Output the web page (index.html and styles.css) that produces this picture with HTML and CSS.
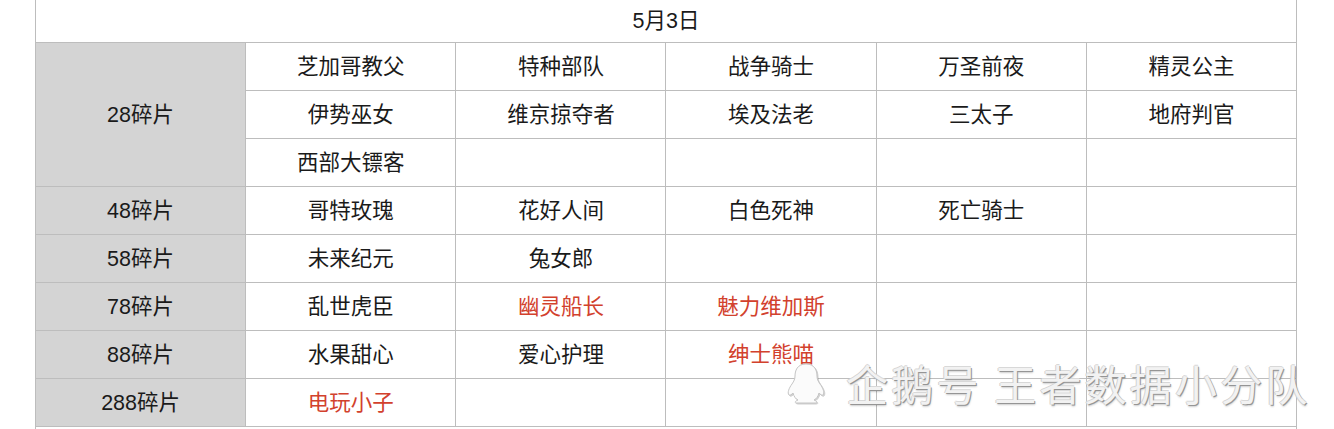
FILE: index.html
```html
<!DOCTYPE html>
<html lang="zh">
<head>
<meta charset="utf-8">
<title>5月3日</title>
<link rel="stylesheet" href="styles.css">
</head>
<body>
<div class="page">
  <table class="grid">
    <colgroup>
      <col class="c"><col class="c"><col class="c"><col class="c"><col class="c"><col class="c">
    </colgroup>
    <tr class="head"><td colspan="6">5月3日</td></tr>
    <tr><td class="label" rowspan="3">28碎片</td><td>芝加哥教父</td><td>特种部队</td><td>战争骑士</td><td>万圣前夜</td><td>精灵公主</td></tr>
    <tr><td>伊势巫女</td><td>维京掠夺者</td><td>埃及法老</td><td>三太子</td><td>地府判官</td></tr>
    <tr><td>西部大镖客</td><td></td><td></td><td></td><td></td></tr>
    <tr><td class="label">48碎片</td><td>哥特玫瑰</td><td>花好人间</td><td>白色死神</td><td>死亡骑士</td><td></td></tr>
    <tr><td class="label">58碎片</td><td>未来纪元</td><td>兔女郎</td><td></td><td></td><td></td></tr>
    <tr><td class="label">78碎片</td><td>乱世虎臣</td><td class="red">幽灵船长</td><td class="red">魅力维加斯</td><td></td><td></td></tr>
    <tr><td class="label">88碎片</td><td>水果甜心</td><td>爱心护理</td><td class="red">绅士熊喵</td><td></td><td></td></tr>
    <tr><td class="label">288碎片</td><td class="red">电玩小子</td><td></td><td></td><td></td><td></td></tr>
    <tr class="next"><td colspan="6"></td></tr>
  </table>
  <div class="watermark">
    <svg class="penguin" width="40" height="42" viewBox="0 0 40 42">
      <path d="M20 2 C11 2 9 9 9 14 C9 17 8 19 6 22 C3 26 1 31 3 33 C4 34 6 32 7 31 C8 35 10 37 12 38 C9 39 8 41 11 41 L29 41 C32 41 31 39 28 38 C30 37 32 35 33 31 C34 32 36 34 37 33 C39 31 37 26 34 22 C32 19 31 17 31 14 C31 9 29 2 20 2 Z" fill="#fbfbfb" stroke="#c4c4c4" stroke-width="1"/>
    </svg>
    <span class="wm-text">企鹅号 王者数据小分队</span>
  </div>
</div>
</body>
</html>
```
FILE: styles.css
```css
html, body {
  margin: 0;
  padding: 0;
  background: #ffffff;
}
.page {
  position: relative;
  width: 1334px;
  height: 429px;
  overflow: hidden;
  font-family: "Liberation Sans", "Noto Sans CJK SC", sans-serif;
}
.grid {
  margin-left: 35px;
  border-collapse: collapse;
  table-layout: fixed;
  width: 1262px;
}
.grid .c {
  width: 210px;
}
.grid td {
  border: 1px solid #bdbdbd;
  height: 47px;
  padding: 0;
  text-align: center;
  vertical-align: middle;
  font-size: 21.5px;
  color: #1a1a1a;
  line-height: 24px;
}
.grid .head td {
  height: 42px;
  border-top: none;
}
.grid .label {
  background: #d4d4d4;
}
.grid .red {
  color: #d2412d;
}
.watermark {
  position: absolute;
  left: 786px;
  top: 358px;
  display: flex;
  align-items: center;
  gap: 20px;
}
.penguin {
  display: block;
  filter: drop-shadow(1px 1px 0 rgba(120,120,120,0.35));
}
.wm-text {
  font-family: "Noto Sans CJK SC", sans-serif;
  font-size: 42px;
  line-height: 50px;
  letter-spacing: 3.2px;
  color: #f2f2f2;
  text-shadow: 1px 1px 0 #959595, -1px 0 0 #d2d2d2, 0 -1px 0 #d8d8d8, 1px 2px 2px rgba(0,0,0,0.2);
  white-space: nowrap;
}
```
